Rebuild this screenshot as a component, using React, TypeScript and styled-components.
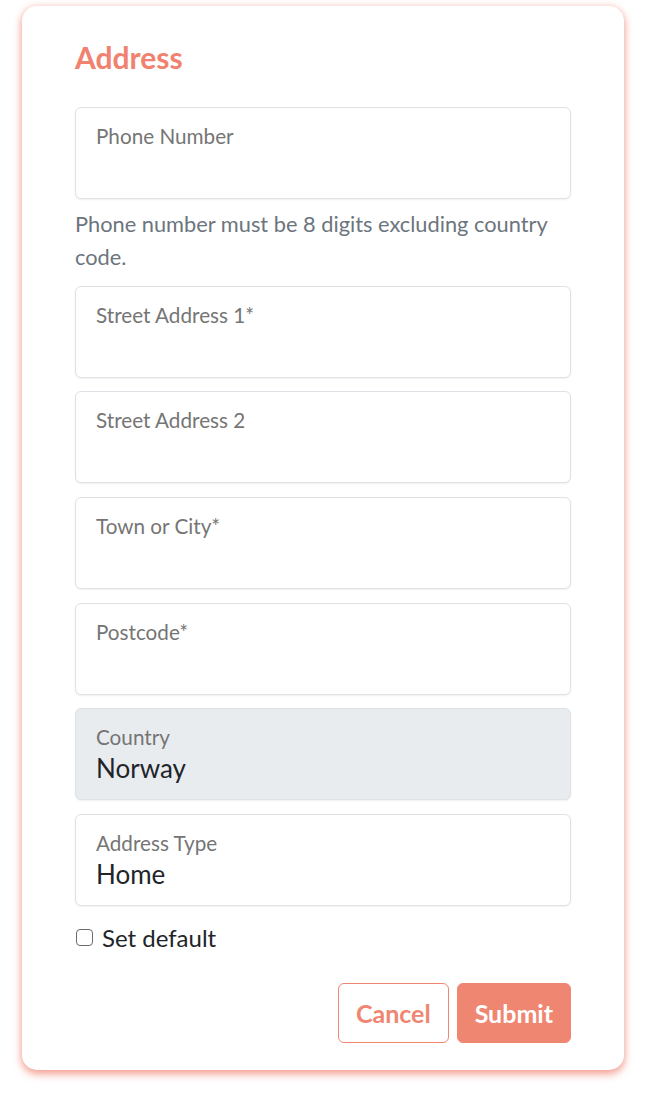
import styled, { createGlobalStyle } from 'styled-components';

const GlobalStyle = createGlobalStyle`
  body {
    margin: 0;
    background: #ffffff;
    font-family: Lato, "Noto Sans", "Liberation Sans", sans-serif;
  }
`;

const Page = styled.div`
  padding: 6px 28px 24px 22px;
`;

const Card = styled.form`
  background: #fff;
  border-radius: 15px;
  box-shadow: 0 4px 8px rgba(239, 124, 104, 0.7), 0 0 6px rgba(239, 124, 104, 0.25);
  padding: 32px 53px 27px 53px;
  display: flex;
  flex-direction: column;
`;

const Title = styled.h2`
  margin: 0 0 31px;
  color: #f0826f;
  font-size: 30px;
  font-weight: 700;
  line-height: 38px;
`;

const Field = styled.div<{ $disabled?: boolean }>`
  height: 92px;
  box-sizing: border-box;
  border: 1px solid #dee2e6;
  border-radius: 6px;
  box-shadow: 0 1px 2px rgba(0, 0, 0, 0.06);
  background: ${(p) => (p.$disabled ? '#e9ecef' : '#fff')};
  padding: 16px 20px 0;
  display: flex;
  flex-direction: column;
  margin-bottom: 13.7px;
`;

const Label = styled.span`
  color: #757575;
  font-size: 20.7px;
  line-height: 24px;
`;

const Value = styled.span`
  color: #212529;
  font-size: 26px;
  line-height: 32px;
  margin-top: 3px;
`;

const Help = styled.p`
  margin: -6px 0 13px;
  color: #6c757d;
  font-size: 21.8px;
  line-height: 33px;
`;

const CheckRow = styled.label`
  display: flex;
  align-items: center;
  gap: 9px;
  color: #212529;
  font-size: 24px;
  line-height: 30px;
  margin: 3px 0 0 0;
`;

const Box = styled.span`
  width: 17px;
  height: 17px;
  box-sizing: border-box;
  border: 1.5px solid #6b6b6b;
  border-radius: 4px;
  margin-left: 1px;
`;

const Actions = styled.div`
  display: flex;
  justify-content: flex-end;
  align-items: center;
  gap: 8px;
  margin-top: 30px;
`;

const Button = styled.button<{ $solid?: boolean }>`
  font-family: inherit;
  font-size: 25px;
  font-weight: 700;
  height: 60px;
  padding: 0 17px;
  border-radius: 6px;
  border: 1px solid #ef8672;
  background: ${(p) => (p.$solid ? '#ef8672' : '#fff')};
  color: ${(p) => (p.$solid ? '#fff' : '#ef8672')};
  cursor: pointer;
`;

const fields = [
  'Street Address 1*',
  'Street Address 2',
  'Town or City*',
  'Postcode*',
];

export default function App() {
  return (
    <Page>
      <GlobalStyle />
      <Card>
        <Title>Address</Title>
        <Field>
          <Label>Phone Number</Label>
        </Field>
        <Help>Phone number must be 8 digits excluding country code.</Help>
        {fields.map((f) => (
          <Field key={f}>
            <Label>{f}</Label>
          </Field>
        ))}
        <Field $disabled>
          <Label>Country</Label>
          <Value>Norway</Value>
        </Field>
        <Field>
          <Label>Address Type</Label>
          <Value>Home</Value>
        </Field>
        <CheckRow>
          <Box />
          Set default
        </CheckRow>
        <Actions>
          <Button type="button">Cancel</Button>
          <Button type="button" $solid>Submit</Button>
        </Actions>
      </Card>
    </Page>
  );
}
